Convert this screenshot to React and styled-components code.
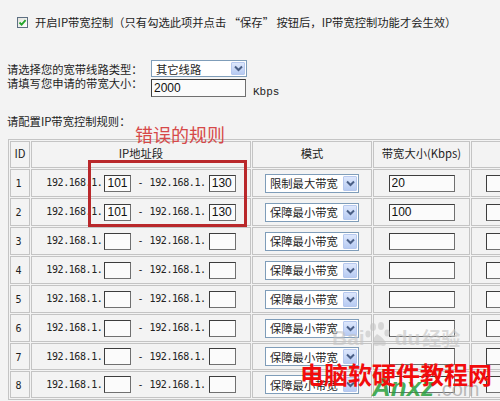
import React from "react";
import styled, { createGlobalStyle } from "styled-components";

const GlobalStyle = createGlobalStyle`
  html, body { margin: 0; padding: 0; overflow: hidden; background: #f3f3f3; }
  body {
    font-family: "Noto Sans CJK SC", sans-serif;
    font-size: 11.3px;
    color: #1e1e1e;
  }
`;

const Page = styled.div`
  position: relative;
  width: 500px;
  height: 401px;
  overflow: hidden;
  display: flex;
  flex-direction: column;
`;

const EnableRow = styled.div`
  display: flex;
  align-items: center;
  gap: 7px;
  margin: 16px 0 0 17px;
  height: 12px;
  line-height: 12px;
  white-space: nowrap;
`;

const CheckBox = styled.span`
  width: 11px;
  height: 11px;
  box-sizing: border-box;
  border: 1px solid #5d6f82;
  background: linear-gradient(135deg, #e2e2dc, #ffffff);
  display: flex;
  align-items: center;
  justify-content: center;
`;

const Settings = styled.div`
  display: grid;
  grid-template-columns: 144px auto auto;
  row-gap: 2px;
  align-items: center;
  justify-content: start;
  margin: 32px 0 0 7px;
`;

const FieldLabel = styled.span`
  line-height: 12px;
  white-space: nowrap;
  align-self: ${(p) => (p.$top ? "start" : "center")};
  margin-top: ${(p) => (p.$top ? "-2px" : "0")};
`;

const Unit = styled.span`
  font-family: "Liberation Mono", monospace;
  font-size: 11px;
  line-height: 11px;
  margin-left: 6px;
  align-self: end;
  margin-bottom: -1px;
`;

const SelectBox = styled.div`
  width: ${(p) => p.$w}px;
  height: ${(p) => p.$h}px;
  box-sizing: border-box;
  border: 1px solid #7f9db9;
  background: #fff;
  display: flex;
  align-items: center;
  justify-content: space-between;
  padding: 0 1px 0 4px;
  font-size: ${(p) => p.$fs}px;
`;

const SelectText = styled.span`
  line-height: 12px;
  white-space: nowrap;
`;

const ArrowBtn = styled.span`
  width: 14px;
  height: ${(p) => p.$h}px;
  box-sizing: border-box;
  border: 1px solid #b6c8ee;
  border-radius: 1px;
  background: linear-gradient(#dde7fc, #b7cbf2);
  display: flex;
  align-items: center;
  justify-content: center;
`;

const TextBox = styled.input`
  display: block;
  width: ${(p) => p.$w}px;
  height: ${(p) => p.$h}px;
  box-sizing: border-box;
  margin: 0;
  padding: 0 2px;
  border: 1px solid #707070;
  border-top-color: #3d3d3d;
  border-left-color: #3d3d3d;
  background: #fbfbfb;
  font-family: "Liberation Sans", sans-serif;
  font-size: 12px;
  color: #111;
  outline: none;
`;

const RulesLabel = styled.div`
  margin: 18px 0 0 7px;
  line-height: 12px;
  white-space: nowrap;
`;

const Table = styled.table`
  border-collapse: separate;
  border-spacing: 1px;
  border: 1px solid #c4c4c4;
  table-layout: fixed;
  width: 561px;
  margin: 12px 0 0 8px;
  flex: none;
`;

const Row = styled.tr`
  height: ${(p) => p.$h}px;
`;

const HeadCell = styled.th`
  width: ${(p) => p.$w}px;
  box-sizing: border-box;
  border: 1px solid #c4c4c4;
  padding: 0 0 4px 0;
  font-weight: normal;
  line-height: 12px;
  text-align: center;
  vertical-align: middle;
  white-space: nowrap;
`;

const Cell = styled.td`
  box-sizing: border-box;
  border: 1px solid #c4c4c4;
  padding: 0;
  line-height: 12px;
  text-align: center;
  vertical-align: middle;
  white-space: nowrap;
`;

const IdText = styled.span`
  font-family: "DejaVu Sans Mono", monospace;
  font-size: 10px;
  margin-left: -3px;
`;

const IpRange = styled.div`
  display: flex;
  align-items: center;
  justify-content: center;
`;

const IpText = styled.span`
  font-family: "DejaVu Sans Mono", monospace;
  font-size: 10px;
  letter-spacing: -0.4px;
  color: #222;
  margin-right: ${(p) => p.$mr || 0}px;
`;

const Dash = styled.span`
  font-family: "DejaVu Sans Mono", monospace;
  font-size: 10px;
  margin: 0 6px 0 6px;
`;

const Centered = styled.div`
  display: flex;
  justify-content: center;
  align-items: center;
`;

const Annotation = styled.div`
  position: absolute;
  left: 135px;
  top: 125px;
  font-size: 18px;
  line-height: 18px;
  color: #d64848;
  white-space: nowrap;
`;

const RedFrame = styled.div`
  position: absolute;
  left: 88px;
  top: 160px;
  width: 159px;
  height: 67px;
  box-sizing: border-box;
  border: 3px solid #b9282b;
`;

const BaiduMark = styled.div`
  position: absolute;
  left: 332px;
  top: 322px;
  display: flex;
  align-items: flex-end;
  color: rgba(195, 195, 195, 0.6);
  font-family: "Liberation Sans", sans-serif;
  font-weight: bold;
  font-size: 21px;
  line-height: 21px;
  pointer-events: none;
`;

const BaiduCn = styled.span`
  font-family: "Noto Sans CJK SC", sans-serif;
  font-size: 19px;
  margin-left: 2px;
`;

const AnxzMark = styled.div`
  position: absolute;
  left: 372px;
  top: 372px;
  display: flex;
  align-items: baseline;
  pointer-events: none;
`;

const AnxzGreen = styled.span`
  font-family: "Liberation Sans", sans-serif;
  font-weight: bold;
  font-style: italic;
  font-size: 26px;
  line-height: 30px;
  color: rgba(40, 160, 60, 0.85);
`;

const AnxzCom = styled.span`
  font-family: "Liberation Sans", sans-serif;
  font-size: 20px;
  color: rgba(170, 170, 170, 0.8);
  margin-left: 2px;
`;

const SiteMark = styled.div`
  position: absolute;
  left: 300px;
  top: 361px;
  font-family: "Noto Sans CJK SC", sans-serif;
  font-weight: bold;
  font-size: 24px;
  line-height: 26px;
  color: #f20c0c;
  white-space: nowrap;
  pointer-events: none;
`;

const Chevron = () => (
  <svg width="9" height="7" viewBox="0 0 9 7">
    <path d="M1 1.5 L4.5 5 L8 1.5" fill="none" stroke="#4a5f86" strokeWidth="2" />
  </svg>
);

const FakeSelect = ({ text, w, h, fs }) => (
  <SelectBox $w={w} $h={h} $fs={fs}>
    <SelectText>{text}</SelectText>
    <ArrowBtn $h={h - 4}>
      <Chevron />
    </ArrowBtn>
  </SelectBox>
);

const rules = [
  { id: 1, from: "101", to: "130", mode: "限制最大带宽", bw: "20", h: 28 },
  { id: 2, from: "101", to: "130", mode: "保障最小带宽", bw: "100", h: 28 },
  { id: 3, from: "", to: "", mode: "保障最小带宽", bw: "", h: 28 },
  { id: 4, from: "", to: "", mode: "保障最小带宽", bw: "", h: 28 },
  { id: 5, from: "", to: "", mode: "保障最小带宽", bw: "", h: 28 },
  { id: 6, from: "", to: "", mode: "保障最小带宽", bw: "", h: 28 },
  { id: 7, from: "", to: "", mode: "保障最小带宽", bw: "", h: 27 },
  { id: 8, from: "", to: "", mode: "保障最小带宽", bw: "", h: 27 },
];

export default function App() {
  return (
    <Page>
      <GlobalStyle />
      <EnableRow>
        <CheckBox>
          <svg width="9" height="9" viewBox="0 0 9 9">
            <path d="M1.5 4.5 L3.6 6.6 L7.6 2.2" fill="none" stroke="#22a52a" strokeWidth="1.8" />
          </svg>
        </CheckBox>
        <span>开启IP带宽控制（只有勾选此项并点击 “保存” 按钮后，IP带宽控制功能才会生效）</span>
      </EnableRow>

      <Settings>
        <FieldLabel>请选择您的宽带线路类型：</FieldLabel>
        <FakeSelect text="其它线路" w={96} h={17} fs={11.3} />
        <span />
        <FieldLabel $top>请填写您申请的带宽大小：</FieldLabel>
        <TextBox $w={95} $h={18} readOnly value="2000" />
        <Unit>Kbps</Unit>
      </Settings>

      <RulesLabel>请配置IP带宽控制规则：</RulesLabel>

      <Table>
        <thead>
          <Row $h={27}>
            <HeadCell $w={20}>ID</HeadCell>
            <HeadCell $w={220}>IP地址段</HeadCell>
            <HeadCell $w={120}>模式</HeadCell>
            <HeadCell $w={97}>带宽大小(Kbps)</HeadCell>
            <HeadCell $w={96} />
          </Row>
        </thead>
        <tbody>
          {rules.map((r) => (
            <Row key={r.id} $h={r.h}>
              <Cell>
                <IdText>{r.id}</IdText>
              </Cell>
              <Cell>
                <IpRange>
                  <IpText $mr={2}>192.168.1.</IpText>
                  <TextBox $w={27} $h={17} readOnly value={r.from} />
                  <Dash>-</Dash>
                  <IpText $mr={3}>192.168.1.</IpText>
                  <TextBox $w={27} $h={17} readOnly value={r.to} />
                </IpRange>
              </Cell>
              <Cell>
                <Centered>
                  <FakeSelect text={r.mode} w={94} h={19} fs={11.3} />
                </Centered>
              </Cell>
              <Cell>
                <Centered>
                  <TextBox $w={66} $h={17} readOnly value={r.bw} />
                </Centered>
              </Cell>
              <Cell>
                <Centered>
                  <TextBox $w={66} $h={17} readOnly value="" />
                </Centered>
              </Cell>
            </Row>
          ))}
        </tbody>
      </Table>

      <Annotation>错误的规则</Annotation>
      <RedFrame />

      <BaiduMark>
        <span>Bai</span>
        <svg width="30" height="26" viewBox="0 0 30 26">
          <g fill="rgba(195,195,195,0.6)">
            <ellipse cx="8" cy="5" rx="3" ry="4" />
            <ellipse cx="16" cy="4" rx="3" ry="4" />
            <ellipse cx="3" cy="12" rx="2.6" ry="3.4" />
            <ellipse cx="22" cy="11" rx="2.6" ry="3.4" />
            <path d="M12 12 C6 18 6 24 12 24 C14 23 16 23 18 24 C23 24 22 18 12 12 Z" />
          </g>
        </svg>
        <span>du</span>
        <BaiduCn>经验</BaiduCn>
      </BaiduMark>

      <AnxzMark>
        <AnxzGreen>Anxz</AnxzGreen>
        <AnxzCom>.com</AnxzCom>
      </AnxzMark>

      <SiteMark>电脑软硬件教程网</SiteMark>
    </Page>
  );
}
